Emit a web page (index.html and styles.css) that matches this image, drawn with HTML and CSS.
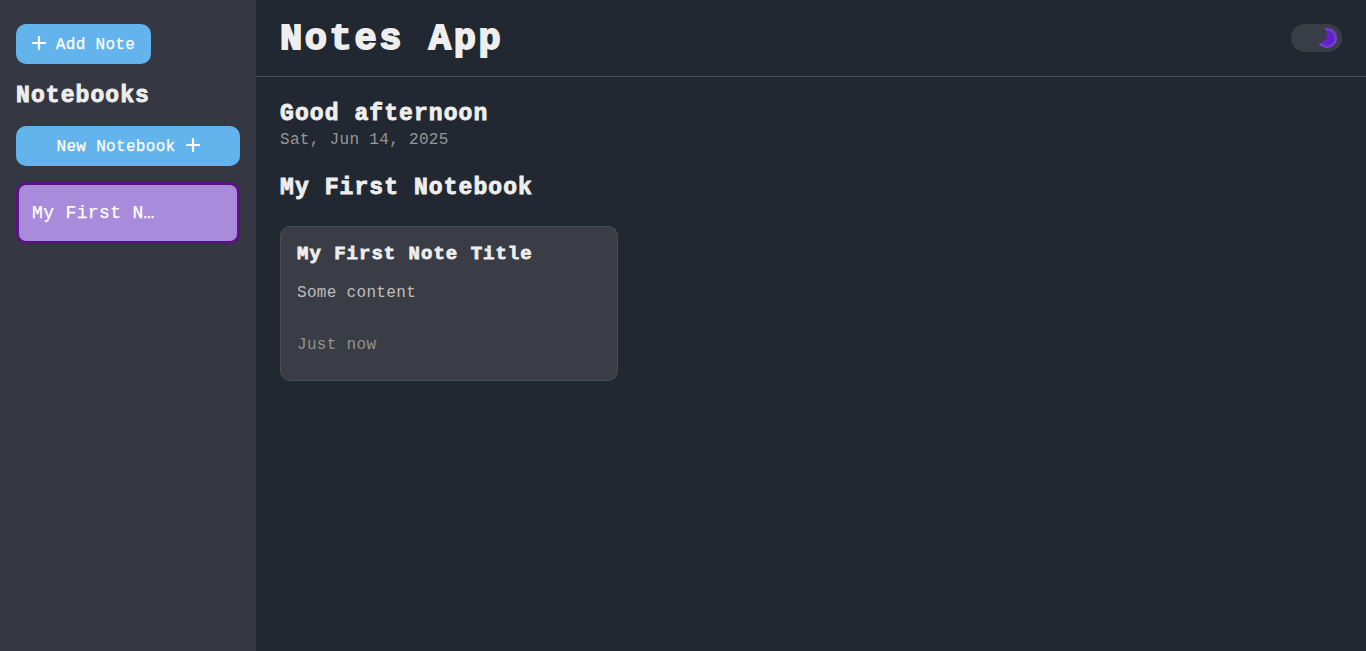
FILE: index.html
```html
<!DOCTYPE html>
<html lang="en">
<head>
<meta charset="utf-8">
<title>Notes App</title>
<link rel="stylesheet" href="styles.css">
</head>
<body>
<div class="app">
  <aside class="sidebar">
    <button class="btn add-note">
      <svg class="plus" viewBox="0 0 14 14"><path d="M7 1v12M1 7h12"/></svg>
      <span>Add Note</span>
    </button>
    <h2 class="heading sidebar-title">Notebooks</h2>
    <button class="btn new-notebook">
      <span>New Notebook</span>
      <svg class="plus" viewBox="0 0 14 14"><path d="M7 1v12M1 7h12"/></svg>
    </button>
    <div class="notebook"><span class="notebook-name">My First N…</span></div>
  </aside>
  <div class="main">
    <header class="header">
      <h1 class="title">Notes App</h1>
      <button class="toggle" aria-label="Toggle theme"><span class="moon"></span></button>
    </header>
    <main class="content">
      <h2 class="heading">Good afternoon</h2>
      <p class="date">Sat, Jun 14, 2025</p>
      <h2 class="heading notebook-heading">My First Notebook</h2>
      <article class="card">
        <h3 class="card-title">My First Note Title</h3>
        <p class="card-text">Some content</p>
        <p class="card-time">Just now</p>
      </article>
    </main>
  </div>
</div>
</body>
</html>
```

FILE: styles.css
```css
* {
  box-sizing: border-box;
  margin: 0;
  padding: 0;
}

body {
  background: #222831;
  color: #eeeeee;
  font: 16px/24px "Liberation Mono", "DejaVu Sans Mono", monospace;
  letter-spacing: 0.32px;
}

.app {
  display: flex;
  height: 100vh;
}

.sidebar {
  display: flex;
  flex-direction: column;
  align-items: flex-start;
  width: 256px;
  padding: 24px 16px;
  background: #353842;
}

.btn {
  display: flex;
  align-items: center;
  justify-content: center;
  gap: 10px;
  height: 40px;
  border: 0;
  border-radius: 10px;
  background: #63b3ed;
  color: #fff;
  font: inherit;
  letter-spacing: inherit;
  -webkit-text-stroke: 0.25px;
}

.btn span {
  padding-top: 2px;
}

.add-note {
  width: 135px;
}

.new-notebook {
  width: 100%;
}

.plus {
  width: 14px;
  height: 14px;
  flex: none;
  margin-bottom: 2px;
  fill: none;
  stroke: #fff;
  stroke-width: 2.2;
  stroke-linecap: round;
}

.heading {
  padding-bottom: 2px;
  font: bold 23px/30px "Liberation Mono", monospace;
  letter-spacing: 1.08px;
  -webkit-text-stroke: 0.9px;
}

.sidebar-title {
  margin: 17px 0 13px;
}

.notebook {
  display: flex;
  align-items: center;
  width: 100%;
  height: 62px;
  margin-top: 16px;
  padding: 0 13px;
  border: 3px solid #5b1283;
  border-radius: 10px;
  background: #a98bdb;
  color: #fff;
  font-size: 18px;
  letter-spacing: 0.36px;
  -webkit-text-stroke: 0.25px;
}

.main {
  flex: 1;
}

.header {
  display: flex;
  align-items: center;
  justify-content: space-between;
  height: 77px;
  padding: 0 24px;
  border-bottom: 1px solid #4a4e5a;
}

.title {
  padding-top: 1px;
  font: bold 37px/60px "Liberation Mono", monospace;
  letter-spacing: 2.6px;
  -webkit-text-stroke: 1.8px;
}

.toggle {
  display: flex;
  align-items: center;
  justify-content: flex-end;
  width: 51px;
  height: 28px;
  padding-right: 5px;
  border: 0;
  border-radius: 14px;
  background: #393d46;
}

.moon {
  width: 20px;
  height: 20px;
  border-radius: 50%;
  background:
    radial-gradient(circle 10px at 0 6px, #393d46 94%, transparent 100%),
    radial-gradient(circle at 50% 50%, #6320cc 45%, #8a55e6 78%);
}

.content {
  padding: 22px 24px;
}

.date {
  margin-top: -1px;
  color: #969696;
  line-height: 20px;
}

.notebook-heading {
  margin: 23px 0 21px;
}

.card {
  width: 338px;
  height: 155px;
  padding: 11px 16px;
  border: 1px solid #4a4c58;
  border-radius: 10px;
  background: #3a3d45;
}

.card-title {
  padding-top: 1px;
  font: bold 19px/31px "Liberation Mono", monospace;
  letter-spacing: 1px;
  -webkit-text-stroke: 0.8px;
}

.card-text {
  margin-top: 11px;
  color: #bdbdbd;
}

.card-time {
  margin-top: 28px;
  color: #92928f;
}
```
